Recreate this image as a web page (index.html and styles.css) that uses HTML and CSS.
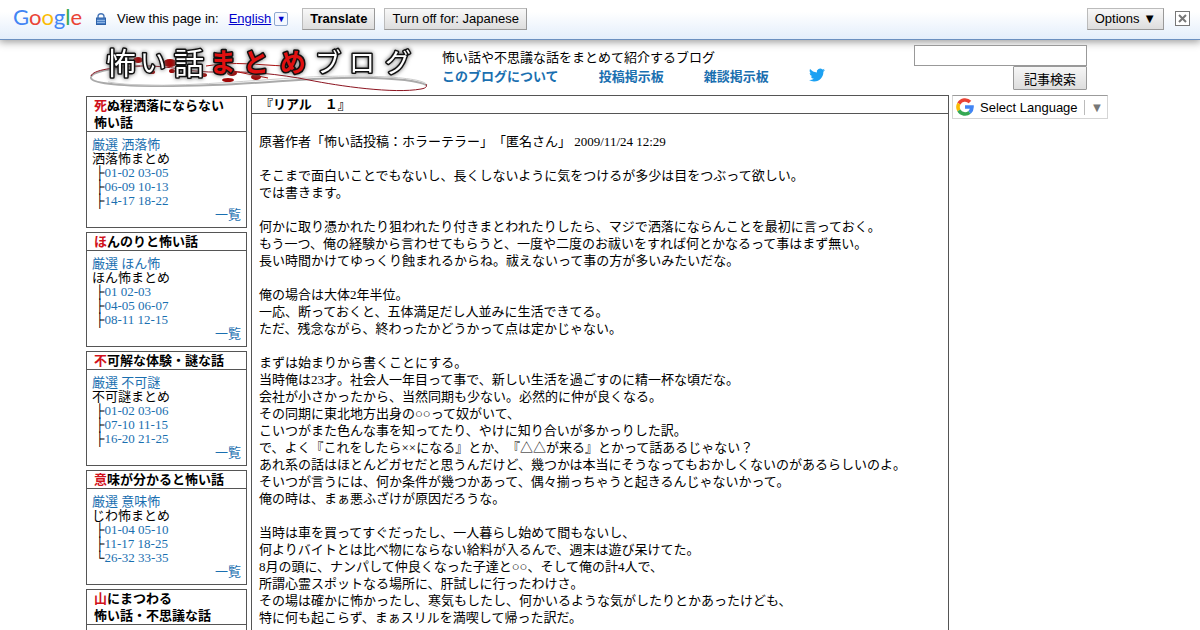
FILE: index.html
```html
<!DOCTYPE html>
<html lang="ja">
<head>
    <meta charset="UTF-8">
    <meta name="viewport" content="width=device-width, initial-scale=1.0">
    <title>リアル 1 - 怖い話まとめブログ</title>
    <link rel="stylesheet" href="styles.css">
</head>
<body>
<!-- 翻訳バー -->
<div class="translate-bar" lang="en">
    <a class="google" href="#"><span class="blue">G</span><span class="red">o</span><span class="yellow">o</span><span class="blue">g</span><span class="green">l</span><span class="red">e</span></a>
    <svg class="lock" width="10" height="12" viewBox="0 0 10 12" aria-hidden="true">
        <path d="M2 6V3.5a3 2.8 0 0 1 6 0V6" fill="none" stroke="#4a78b8" stroke-width="1.4"/>
        <rect x="0.5" y="5" width="9" height="6.5" fill="#4a7fc4" stroke="#2f62a8"/>
        <path d="M1 7.5h8M1 9.5h8" stroke="#8db4e4"/>
    </svg>
    <span class="view">View this page in:</span>
    <a class="lang" href="#">English</a>
    <button class="lang-arrow" aria-label="Languages">▼</button>
    <button class="bar-btn strong">Translate</button>
    <button class="bar-btn">Turn off for: Japanese</button>
    <button class="bar-btn options">Options ▼</button>
    <button class="close" aria-label="Close">
        <svg width="9" height="9" viewBox="0 0 9 9"><path d="M1 1l7 7M8 1l-7 7" stroke="#777" stroke-width="2"/></svg>
    </button>
</div>

<div class="page">
    <header class="header">
        <a class="logo" href="#">
            <svg width="342" height="50" viewBox="0 0 342 50">
                <g fill="none">
                    <path d="M52 24C20 26 2 31 3 36c2 8 60 9 122 7 60-2 110-9 160-7 35 1 54 5 53 8" stroke="#aaa" stroke-width="2"/>
                    <path d="M20 40c40 7 110 1 170-3 60-5 145-4 149 6" stroke="#ccc"/>
                    <path d="M3 34c2-6 22-9 50-10s50 7 78 6 60 2 90 8 85 14 112 9c6-1 6-3 5-5" stroke="#8c1420"/>
                    <path d="M118 24c30-5 50-1 80 0M140 28l40 8" stroke="#a80c0c"/>
                </g>
                <g fill="#a00808">
                    <ellipse cx="50" cy="18" rx="5" ry="3"/>
                    <ellipse cx="82" cy="21" rx="7" ry="4"/>
                    <ellipse cx="64" cy="30" rx="3" ry="2"/>
                    <ellipse cx="84" cy="29" rx="3" ry="2"/>
                    <ellipse cx="115" cy="33" rx="4" ry="2"/>
                    <ellipse cx="144" cy="31" rx="5" ry="3"/>
                    <ellipse cx="140" cy="38" rx="6" ry="2"/>
                    <ellipse cx="168" cy="35" rx="5" ry="3"/>
                </g>
                <g class="logo-text">
                    <text class="kanji" x="33" y="32">怖</text>
                    <text x="65" y="30">い</text>
                    <text class="kanji" x="101" y="32">話</text>
                    <text class="blood" x="135 168 205" y="30">まとめ</text>
                    <text x="240 274 310" y="30">ブログ</text>
                </g>
            </svg>
        </a>
        <div class="intro">
            <p>怖い話や不思議な話をまとめて紹介するブログ</p>
            <nav class="nav">
                <a href="#">このブログについて</a>
                <a href="#">投稿掲示板</a>
                <a href="#">雑談掲示板</a>
                <a class="twitter" href="#" aria-label="Twitter">
                    <svg width="16" height="16" viewBox="0 0 24 24"><path fill="#1da1f2" d="M23.95 4.57a10 10 0 0 1-2.82.77 4.96 4.96 0 0 0 2.16-2.72c-.95.55-2 .95-3.13 1.18a4.92 4.92 0 0 0-8.38 4.48C7.69 8.09 4.07 6.13 1.64 3.16a4.82 4.82 0 0 0-.67 2.48c0 1.71.87 3.21 2.19 4.1a4.9 4.9 0 0 1-2.23-.62v.06a4.92 4.92 0 0 0 3.95 4.83 5 5 0 0 1-2.21.08 4.94 4.94 0 0 0 4.6 3.42A9.87 9.87 0 0 1 0 19.54a13.99 13.99 0 0 0 7.55 2.21c9.05 0 14-7.5 14-13.98 0-.21 0-.42-.02-.63a9.94 9.94 0 0 0 2.42-2.57z"/></svg>
                </a>
            </nav>
        </div>
        <form class="search" action="#">
            <input type="text" name="q" aria-label="記事検索">
            <button type="submit">記事検索</button>
        </form>
    </header>

    <div class="columns">
        <aside class="side">
            <section class="box">
                <h2><em>死</em>ぬ程洒落にならない<br>怖い話</h2>
                <div class="links">
                    <a href="#">厳選 洒落怖</a><br>
                    洒落怖まとめ<br>
                    &nbsp;├<a href="#">01-02</a> <a href="#">03-05</a><br>
                    &nbsp;├<a href="#">06-09</a> <a href="#">10-13</a><br>
                    &nbsp;├<a href="#">14-17</a> <a href="#">18-22</a>
                    <a class="all" href="#">一覧</a>
                </div>
            </section>
            <section class="box">
                <h2><em>ほ</em>んのりと怖い話</h2>
                <div class="links">
                    <a href="#">厳選 ほん怖</a><br>
                    ほん怖まとめ<br>
                    &nbsp;├<a href="#">01</a> <a href="#">02-03</a><br>
                    &nbsp;├<a href="#">04-05</a> <a href="#">06-07</a><br>
                    &nbsp;├<a href="#">08-11</a> <a href="#">12-15</a>
                    <a class="all" href="#">一覧</a>
                </div>
            </section>
            <section class="box">
                <h2><em>不</em>可解な体験・謎な話</h2>
                <div class="links">
                    <a href="#">厳選 不可謎</a><br>
                    不可謎まとめ<br>
                    &nbsp;├<a href="#">01-02</a> <a href="#">03-06</a><br>
                    &nbsp;├<a href="#">07-10</a> <a href="#">11-15</a><br>
                    &nbsp;├<a href="#">16-20</a> <a href="#">21-25</a>
                    <a class="all" href="#">一覧</a>
                </div>
            </section>
            <section class="box">
                <h2><em>意</em>味が分かると怖い話</h2>
                <div class="links">
                    <a href="#">厳選 意味怖</a><br>
                    じわ怖まとめ<br>
                    &nbsp;├<a href="#">01-04</a> <a href="#">05-10</a><br>
                    &nbsp;├<a href="#">11-17</a> <a href="#">18-25</a><br>
                    &nbsp;└<a href="#">26-32</a> <a href="#">33-35</a>
                    <a class="all" href="#">一覧</a>
                </div>
            </section>
            <section class="box">
                <h2><em>山</em>にまつわる<br>怖い話・不思議な話</h2>
                <div class="links"></div>
            </section>
        </aside>

        <main class="article">
            <h1>『リアル　１』</h1>
            <div class="story">
                <p>原著作者「怖い話投稿：ホラーテラー」「匿名さん」 2009/11/24 12:29</p>
                <p>そこまで面白いことでもないし、長くしないように気をつけるが多少は目をつぶって欲しい。<br>
                では書きます。</p>
                <p>何かに取り憑かれたり狙われたり付きまとわれたりしたら、マジで洒落にならんことを最初に言っておく。<br>
                もう一つ、俺の経験から言わせてもらうと、一度や二度のお祓いをすれば何とかなるって事はまず無い。<br>
                長い時間かけてゆっくり蝕まれるからね。祓えないって事の方が多いみたいだな。</p>
                <p>俺の場合は大体2年半位。<br>
                一応、断っておくと、五体満足だし人並みに生活できてる。<br>
                ただ、残念ながら、終わったかどうかって点は定かじゃない。</p>
                <p>まずは始まりから書くことにする。<br>
                当時俺は23才。社会人一年目って事で、新しい生活を過ごすのに精一杯な頃だな。<br>
                会社が小さかったから、当然同期も少ない。必然的に仲が良くなる。<br>
                その同期に東北地方出身の○○って奴がいて、<br>
                こいつがまた色んな事を知ってたり、やけに知り合いが多かっりした訳。<br>
                で、よく『これをしたら××になる』とか、『△△が来る』とかって話あるじゃない？<br>
                あれ系の話はほとんどガセだと思うんだけど、幾つかは本当にそうなってもおかしくないのがあるらしいのよ。<br>
                そいつが言うには、何か条件が幾つかあって、偶々揃っちゃうと起きるんじゃないかって。<br>
                俺の時は、まぁ悪ふざけが原因だろうな。</p>
                <p>当時は車を買ってすぐだったし、一人暮らし始めて間もないし、<br>
                何よりバイトとは比べ物にならない給料が入るんで、週末は遊び呆けてた。<br>
                8月の頭に、ナンパして仲良くなった子達と○○、そして俺の計4人で、<br>
                所謂心霊スポットなる場所に、肝試しに行ったわけさ。<br>
                その場は確かに怖かったし、寒気もしたし、何かいるような気がしたりとかあったけども、<br>
                特に何も起こらず、まぁスリルを満喫して帰った訳だ。</p>
            </div>
        </main>

        <div class="right">
            <a class="select-lang" href="#" lang="en">
                <svg width="18" height="18" viewBox="0 0 18 18" fill="none" stroke-width="3.6" aria-hidden="true">
                    <path d="M2.9 5.6A7 7 0 0 1 14 4.1" stroke="#ea4335"/>
                    <path d="M2.9 12.4a7 7 0 0 1 0-6.8" stroke="#fbbc05"/>
                    <path d="M13.6 14.3a7 7 0 0 1-10.7-1.9" stroke="#34a853"/>
                    <path d="M9 9h7a7 7 0 0 1-2.4 5.3" stroke="#4285f4"/>
                </svg>
                <span>Select Language</span>
                <span class="arrow">▼</span>
            </a>
        </div>
    </div>
</div>
</body>
</html>
```

FILE: styles.css
```css
*{box-sizing:border-box;}
body{margin:0;background:#fff;color:#000;font:13px/17px "Liberation Serif","Noto Sans CJK JP",serif;text-spacing-trim:space-all;overflow-x:hidden;}
a{color:#1a6fb0;text-decoration:none;}
p,h1,h2{margin:0;}
button,input{font-family:"Liberation Sans","Noto Sans CJK JP",sans-serif;font-size:13px;}

/* 翻訳バー */
.translate-bar{display:flex;align-items:center;height:40px;padding:0 10px 2px 13px;border-bottom:1px solid #6b90c0;background:linear-gradient(#fff 30%,#e3eefb);box-shadow:0 1px 8px 1px #999;font-family:"Liberation Sans",sans-serif;}
.google{align-self:flex-start;font:22px/34px Lato,sans-serif;width:69px;}
.blue{color:#4285f4;}
.red{color:#ea4335;}
.yellow{color:#fbbc05;}
.green{color:#34a853;}
.lock{margin:0 11px 0 14px;}
.lang{margin:0 3px 0 10px;color:#0000cc;text-decoration:underline;}
.lang-arrow{width:14px;height:14px;margin-right:14px;padding:0;border:1px solid #8fa8d0;border-radius:2px;background:#f4f8ff;color:#0000cc;font-size:9px;line-height:12px;}
.bar-btn{height:22px;margin-right:9px;padding:0 7px;border:1px solid;border-color:#bbb #999 #999 #bbb;background:linear-gradient(#f8f8f8,#ddd);color:#000;}
.strong{font-weight:700;}
.options{margin:0 11px 0 auto;}
.close{display:flex;align-items:center;justify-content:center;width:15px;height:15px;padding:0;border:1px solid #777;background:#fff;}

.page{max-width:1028px;margin:0 auto;}
.header{display:flex;height:55px;padding-top:2px;}
.logo{width:342px;margin-left:2px;}
.logo svg{display:block;overflow:visible;}
.logo-text{font:400 26px "Noto Sans CJK JP",sans-serif;text-anchor:middle;fill:#fff;stroke:#111;stroke-width:3px;stroke-linejoin:round;paint-order:stroke;filter:drop-shadow(0 0 2px #666);}
.kanji{font-size:30px;}
.blood{fill:#e01010;font-weight:700;}
.intro{flex:1;padding:6px 0 0 12px;line-height:19px;}
.nav{display:flex;gap:40px;font-weight:700;}
.twitter svg{display:block;}
.search{display:flex;flex-direction:column;align-items:flex-end;width:173px;margin-right:27px;padding-top:3px;}
.search input{width:100%;height:21px;border:1px solid #999;}
.search button{height:24px;padding:0 10px;border:1px solid #999;border-radius:1px;background:linear-gradient(#f6f6f6,#ddd);color:#000;}

.columns{display:flex;align-items:flex-start;}
.side{display:flex;flex-direction:column;gap:4px;width:161px;margin:1px 4px 0 0;}
.box{border:1px solid #555;}
.box h2{padding-left:7px;border-bottom:1px solid #555;font-size:13px;line-height:17px;}
.box em{color:#d0111b;font-style:normal;}
.links{padding:6px 5px 5px;line-height:14px;}
.all{display:block;text-align:right;}

.article{flex:1;border:1px solid #555;}
.article h1{padding-left:8px;border-bottom:1px solid #555;font-size:13px;line-height:17px;}
.story{padding:19px 7px;}
.story p{margin-bottom:17px;}

.right{width:162px;margin-left:3px;}
.select-lang{display:inline-flex;align-items:center;height:24px;padding:0 4px 0 3px;border:1px solid #d5d5d5;border-top-color:#9b9b9b;color:#000;font-family:"Liberation Sans",sans-serif;}
.select-lang svg{margin-right:6px;}
.arrow{margin-left:6px;padding-left:6px;border-left:1px solid #bbb;color:#777;line-height:15px;}
```
